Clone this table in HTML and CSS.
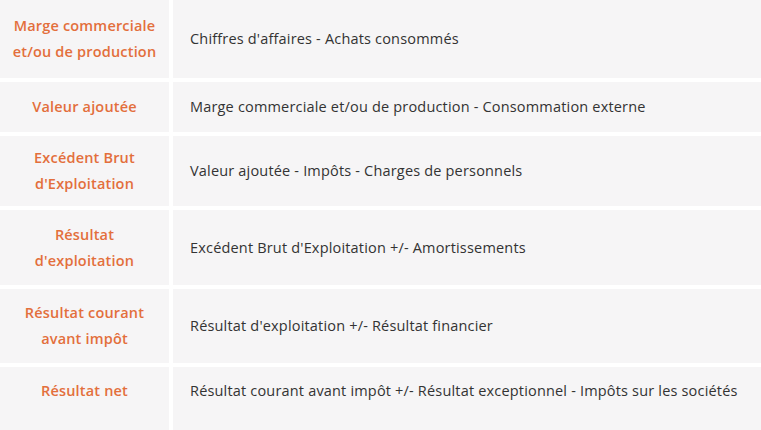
FILE: index.html
```html
<!DOCTYPE html>
<html lang="fr">
<head>
    <meta charset="UTF-8">
    <meta name="viewport" content="width=device-width, initial-scale=1.0">
    <title>Soldes intermédiaires de gestion</title>
    <link rel="stylesheet" href="styles.css">
</head>
<body>
    <div class="sig-table">
        <div class="cell label">Marge commerciale et/ou de production</div>
        <div class="cell formula">Chiffres d'affaires - Achats consommés</div>

        <div class="cell label">Valeur ajoutée</div>
        <div class="cell formula">Marge commerciale et/ou de production - Consommation externe</div>

        <div class="cell label">Excédent Brut d'Exploitation</div>
        <div class="cell formula">Valeur ajoutée - Impôts - Charges de personnels</div>

        <div class="cell label">Résultat d'exploitation</div>
        <div class="cell formula">Excédent Brut d'Exploitation +/- Amortissements</div>

        <div class="cell label">Résultat courant avant impôt</div>
        <div class="cell formula">Résultat d'exploitation +/- Résultat financier</div>

        <div class="cell label last">Résultat net</div>
        <div class="cell formula last">Résultat courant avant impôt +/- Résultat exceptionnel - Impôts sur les sociétés</div>
    </div>
</body>
</html>
```

FILE: styles.css
```css
body {
    margin: 0;
    padding: 0;
    background: #fff;
    font-family: "Open Sans", Arial, sans-serif;
    color: #333;
}

.sig-table {
    display: grid;
    grid-template-columns: 169px 1fr;
    grid-template-rows: 78px 50px 70px 75px 74px 63px;
    gap: 4px;
    height: 430px;
    overflow: hidden;
}

.cell {
    background: #f6f5f6;
    display: flex;
    align-items: center;
    font-size: 14.5px;
    letter-spacing: 0.18px;
    line-height: 26px;
}

.label {
    justify-content: center;
    text-align: center;
    padding: 0 8px;
    color: #e36f3c;
    font-weight: 600;
}

.formula {
    padding-left: 17px;
    color: #333;
}

.last {
    align-items: flex-start;
    padding-top: 11px;
}
```
